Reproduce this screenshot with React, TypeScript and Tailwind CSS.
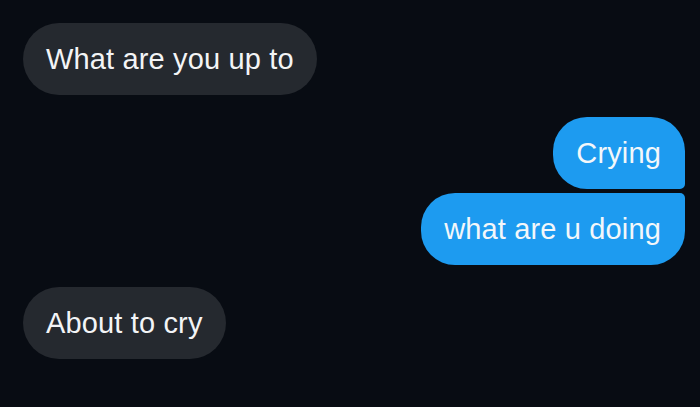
import React from "react";

const font = { fontFamily: '"Liberation Sans", Arial, sans-serif' };

function Incoming({ text }: { text: string }) {
  return (
    <div className="flex justify-start">
      <div className="flex h-[72px] items-center rounded-full bg-[#25292f] pl-[23px] pr-[23px] pt-[1px] text-[29px] tracking-[0.15px] text-[#f3f4f6]">
        {text}
      </div>
    </div>
  );
}

export default function App() {
  return (
    <div
      className="flex h-[407px] w-[700px] flex-col overflow-hidden bg-[#080c13] pl-[23px] pr-[15px] pt-[23px]"
      style={font}
    >
      <Incoming text="What are you up to" />

      {/* outgoing group */}
      <div className="mt-[22px] flex justify-end">
        <div className="flex h-[72px] items-center rounded-[34px] rounded-br-[5px] bg-[#1d9bf0] pl-[23px] pr-[24px] pt-[1px] text-[29px] tracking-[0.15px] text-[#f3f7fa]">
          Crying
        </div>
      </div>
      <div className="mt-[4px] flex justify-end">
        <div className="flex h-[72px] items-center rounded-[34px] rounded-tr-[5px] bg-[#1d9bf0] pl-[23px] pr-[24px] pt-[1px] text-[29px] tracking-[0.15px] text-[#f3f7fa]">
          what are u doing
        </div>
      </div>

      <div className="mt-[22px]">
        <Incoming text="About to cry" />
      </div>
    </div>
  );
}
